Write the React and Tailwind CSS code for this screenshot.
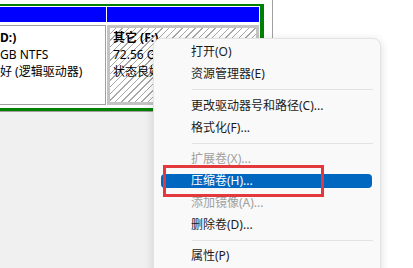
import React from "react";

const menuItems = [
  { label: "打开(O)" },
  { label: "资源管理器(E)" },
  { sep: true },
  { label: "更改驱动器号和路径(C)..." },
  { label: "格式化(F)..." },
  { sep: true },
  { label: "扩展卷(X)...", disabled: true },
  { label: "压缩卷(H)...", active: true },
  { label: "添加镜像(A)...", disabled: true },
  { label: "删除卷(D)..." },
  { sep: true },
  { label: "属性(P)" },
];

function MenuRow({ item }) {
  if (item.sep) {
    return (
      <div className="flex h-[10px] items-center">
        <div className="ml-[38px] mr-[7px] h-px flex-1 bg-[#e2e2e2]" />
      </div>
    );
  }
  const color = item.active ? "text-white" : item.disabled ? "text-[#a0a0a0]" : "text-[#1b1b1b]";
  return (
    <div className="relative flex h-[21.75px] items-center pl-[37px]">
      {item.active ? (
        <div className="absolute left-[7px] right-[8px] top-[4px] h-[14px] rounded-[4px] bg-[#0067c0]" />
      ) : null}
      <span className={`relative text-[12px] leading-[17px] ${color}`}>{item.label}</span>
    </div>
  );
}

function Partition({ hatched, lines, className }) {
  return (
    <div className={`flex flex-col ${className}`}>
      <div className="h-[15px] bg-[#0000ff]" />
      <div
        className={
          hatched
            ? "mt-[3px] h-[80px] border-[3px] border-[#c4c4c4] bg-[repeating-linear-gradient(135deg,#ffffff_0px,#ffffff_3.7px,#a8a8a8_3.7px,#a8a8a8_4.7px)] pl-[3px] pt-[1px]"
            : "mt-[3px] h-[80px] border-y border-r border-[#a0a0a0] bg-white pt-[3px]"
        }
      >
        {lines.map((line, i) => (
          <div
            key={i}
            className={`whitespace-nowrap text-[12px] leading-[17px] text-black ${i === 0 ? "font-bold" : ""}`}
          >
            {line}
          </div>
        ))}
      </div>
    </div>
  );
}

export default function App() {
  return (
    <div className="relative flex h-[268px] w-[413px] overflow-hidden font-['Noto_Sans','Noto_Sans_CJK_SC',sans-serif]">
      <div className="flex w-[273px] flex-col bg-[#f0f0f0]">
        <div className="h-[112px] border-b border-r border-[#a0a0a0] bg-white pt-[4px]">
          <div className="flex h-[107px] w-[264px] gap-px border-b-[3px] border-r-4 border-t-2 border-[#008000] pr-px pt-px">
            <Partition className="w-[106px]" lines={["D:)", "GB NTFS", "好 (逻辑驱动器)"]} />
            <Partition
              hatched
              className="flex-1 overflow-hidden"
              lines={["其它  (F:)", "72.56 GB NTFS", "状态良好 (逻辑驱动器)"]}
            />
          </div>
        </div>
      </div>
      <div className="flex-1 bg-white" />

      <div className="absolute left-[153px] top-[38px] h-[250px] w-[228px] rounded-[8px] border border-[#e3e3e3] bg-[#f9f9f9] pt-[2px] shadow-[0_2px_10px_rgba(0,0,0,0.14)]">
        {menuItems.map((item, i) => (
          <MenuRow key={i} item={item} />
        ))}
      </div>

      <div className="absolute left-[163px] top-[165px] h-[32px] w-[161px] border-[3px] border-[#e4393c]" />
    </div>
  );
}
